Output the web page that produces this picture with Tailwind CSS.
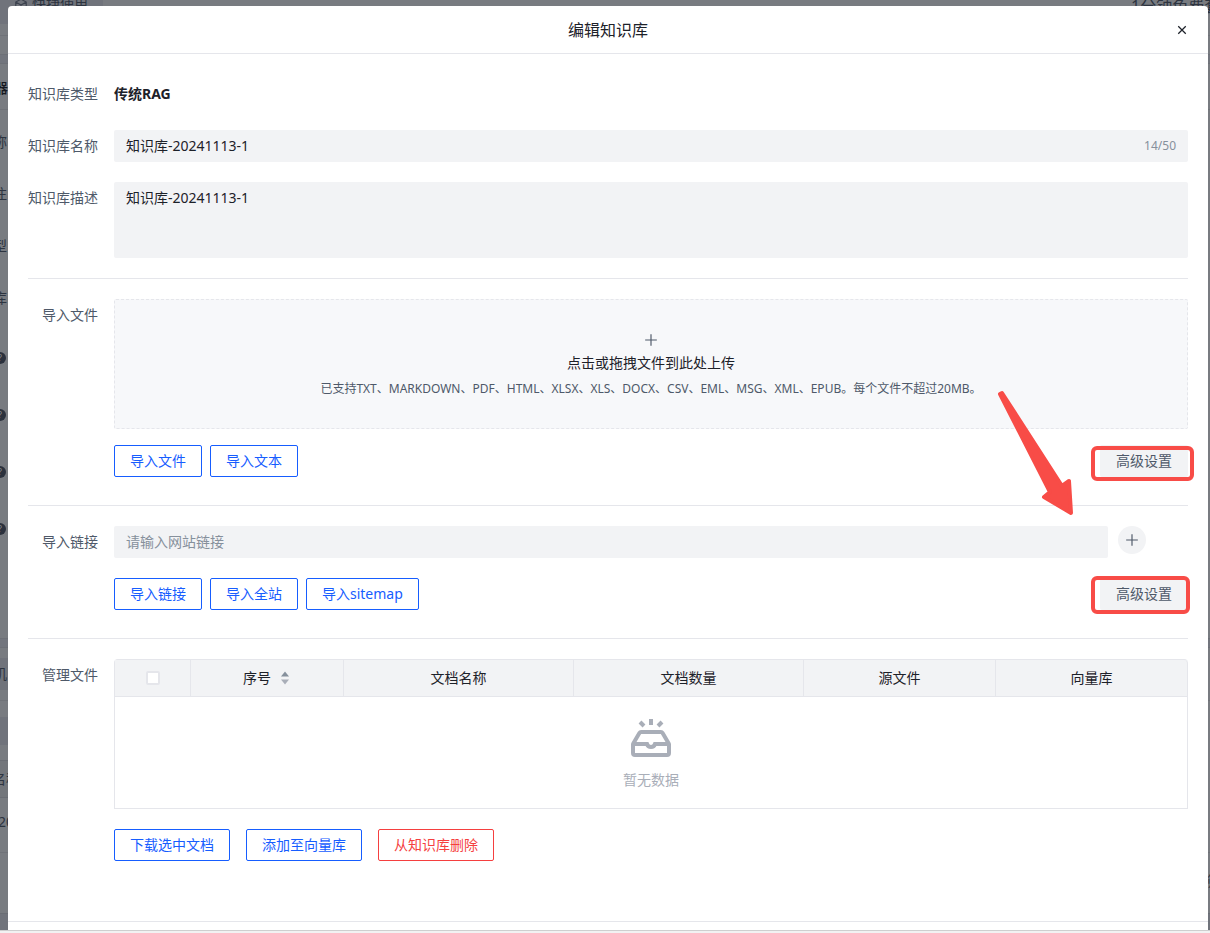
<!DOCTYPE html>
<html lang="zh-CN">
<head>
<meta charset="utf-8">
<meta name="viewport" content="width=device-width, initial-scale=1">
<title>编辑知识库</title>
<script src="https://cdn.jsdelivr.net/npm/@tailwindcss/browser@4"></script>
</head>
<body class="relative min-h-screen overflow-hidden bg-[#f2f2f2] font-['Noto_Sans','Noto_Sans_CJK_SC',sans-serif] text-sm text-[#1d2129]">

<!-- Dimmed page behind the dialog -->
<div class="absolute inset-x-0 top-0 bottom-[3px] overflow-hidden bg-[#787b80] text-[#2d3440]" aria-hidden="true">
  <div class="absolute top-0 left-0 h-6 w-[103px] bg-[#70737b]"></div>
  <svg class="absolute -top-0.5 left-3.5 size-3.5" viewBox="0 0 48 48" fill="none" stroke="#3c424e" stroke-width="4"><path d="M24 4 42 14v20L24 44 6 34V14Zm0 20v20M6 14l18 10 18-10"/></svg>
  <span class="absolute -top-1.5 left-8 leading-5">快捷使用</span>
  <span class="absolute -top-1.5 left-[1131px] text-base leading-6 whitespace-nowrap">1分钟免费套餐</span>
  <div class="absolute top-[35px] left-0 h-px w-full bg-[#6f7278]"></div>
  <div class="absolute top-[54px] left-0 h-2.5 w-full border-y border-[#6d7077] bg-[#72757d]"></div>
  <div class="absolute top-[109px] left-0 h-px w-full bg-[#6f7278]"></div>
  <span class="absolute top-[78px] -left-1.5 leading-5 font-medium text-[#15181f]">器</span>
  <span class="absolute top-[132px] -left-[7px] leading-5">称</span>
  <span class="absolute top-[184px] -left-[7px] leading-5">注</span>
  <span class="absolute top-[236px] -left-[7px] leading-5">型</span>
  <span class="absolute top-[288px] -left-[7px] leading-5">库</span>
  <span class="absolute top-[352px] -left-1.5 size-3 rounded-full bg-[#2b313d] text-center text-[9px] leading-3 text-[#85888d]">?</span>
  <span class="absolute top-[409px] -left-1.5 size-3 rounded-full bg-[#2b313d] text-center text-[9px] leading-3 text-[#85888d]">?</span>
  <span class="absolute top-[466px] -left-1.5 size-3 rounded-full bg-[#2b313d] text-center text-[9px] leading-3 text-[#85888d]">?</span>
  <span class="absolute top-[523px] -left-1.5 size-3 rounded-full bg-[#2b313d] text-center text-[9px] leading-3 text-[#85888d]">?</span>
  <div class="absolute top-[638px] left-0 h-2.5 w-full border-y border-[#6d7077] bg-[#72757d]"></div>
  <div class="absolute top-[658px] left-0 h-8 w-2 bg-[#70737b]"></div>
  <span class="absolute top-[664px] -left-[7px] leading-5">机</span>
  <div class="absolute top-[700px] left-0 h-px w-full bg-[#6f7278]"></div>
  <div class="absolute top-[717px] left-0 h-7 w-2 bg-[#70737b]"></div>
  <div class="absolute top-[760px] left-0 h-[38px] w-2 border-y border-[#6a6d74] bg-[#73767b]"></div>
  <span class="absolute top-[769px] -left-2 leading-5">名称</span>
  <span class="absolute top-[812px] -left-0.5 leading-5">20</span>
  <span class="absolute top-[871px] left-[1207px] leading-5">筛</span>
  <div class="absolute top-[852px] left-0 h-px w-full bg-[#6f7278]"></div>
  <div class="absolute top-[913px] left-0 h-5 w-full border-t border-[#6a6d74] bg-[#70737b]"></div>
</div>
<div class="absolute inset-x-0 bottom-0 h-[3px] border-t border-[#cfcfcf] bg-[#f2f2f2]"></div>

<div role="dialog" aria-labelledby="dialog-title" class="relative mt-1.5 mr-0.5 mb-[3px] ml-2 rounded-t bg-white">
  <header class="relative flex h-12 items-center justify-center border-b border-[#e5e6eb]">
    <h1 id="dialog-title" class="text-base leading-6">编辑知识库</h1>
    <button type="button" aria-label="关闭" class="absolute right-5 flex size-3 items-center justify-center">
      <svg class="size-3" viewBox="0 0 48 48" fill="none" stroke="currentColor" stroke-width="5"><path d="M9 9l30 30M39 9 9 39"/></svg>
    </button>
  </header>

  <form class="px-5 pt-6">
    <div class="flex gap-4">
      <span class="w-[70px] shrink-0 text-right leading-8 whitespace-nowrap text-[#4e5969]">知识库类型</span>
      <span class="leading-8 font-bold">传统RAG</span>
    </div>

    <div class="mt-5 flex gap-4">
      <label for="kb-name" class="w-[70px] shrink-0 text-right leading-8 whitespace-nowrap text-[#4e5969]">知识库名称</label>
      <div class="flex h-8 min-w-0 flex-1 items-center rounded-xs bg-[#f2f3f5] px-3">
        <input id="kb-name" type="text" maxlength="50" value="知识库-20241113-1" class="min-w-0 flex-1 bg-transparent leading-5 outline-none">
        <span class="text-xs text-[#86909c]">14/50</span>
      </div>
    </div>

    <div class="mt-5 flex gap-4">
      <label for="kb-desc" class="w-[70px] shrink-0 text-right leading-8 whitespace-nowrap text-[#4e5969]">知识库描述</label>
      <textarea id="kb-desc" class="block h-[76px] min-w-0 flex-1 resize-none rounded-xs bg-[#f2f3f5] px-3 py-1.5 leading-5 outline-none">知识库-20241113-1</textarea>
    </div>

    <hr class="mt-5 border-[#e5e6eb]">

    <section class="mt-5 flex gap-4">
      <span class="w-[70px] shrink-0 text-right leading-8 text-[#4e5969]">导入文件</span>
      <div class="min-w-0 flex-1">
        <button type="button" class="flex h-[130px] w-full flex-col items-center justify-center rounded-xs border border-dashed border-[#e5e6eb] bg-[#f7f8fa] pt-1">
          <svg class="size-3.5 text-[#4e5969]" viewBox="0 0 48 48" fill="none" stroke="currentColor" stroke-width="4"><path d="M4 24h40M24 4v40"/></svg>
          <span class="mt-1 leading-6">点击或拖拽文件到此处上传</span>
          <span class="mt-1 text-xs leading-5 text-[#4e5969]">已支持TXT、MARKDOWN、PDF、HTML、XLSX、XLS、DOCX、CSV、EML、MSG、XML、EPUB。每个文件不超过20MB。</span>
        </button>
        <div class="mt-4 flex gap-2">
          <button type="button" class="h-8 rounded-xs border border-[#165dff] px-[15px] text-[#165dff]">导入文件</button>
          <button type="button" class="h-8 rounded-xs border border-[#165dff] px-[15px] text-[#165dff]">导入文本</button>
          <button type="button" class="relative ml-auto h-8 rounded-xs bg-[#f2f3f5] px-4 text-[#4e5969]">高级设置<span class="absolute top-px -right-1.5 -bottom-1 -left-[9px] rounded-md border-4 border-[#f84c47]"></span></button>
        </div>
      </div>
    </section>

    <hr class="mt-7 border-[#e5e6eb]">

    <section class="mt-5 flex gap-4">
      <label for="kb-link" class="w-[70px] shrink-0 text-right leading-8 text-[#4e5969]">导入链接</label>
      <div class="min-w-0 flex-1">
        <div class="flex items-start gap-2.5 pr-[42px]">
          <input id="kb-link" type="url" placeholder="请输入网站链接" class="h-8 min-w-0 flex-1 rounded-xs bg-[#f2f3f5] px-3 pb-0.5 outline-none placeholder:text-[#86909c]">
          <button type="button" aria-label="添加链接" class="flex size-7 items-center justify-center rounded-full bg-[#f2f3f5] text-[#4e5969]">
            <svg class="size-3.5" viewBox="0 0 48 48" fill="none" stroke="currentColor" stroke-width="4"><path d="M4 24h40M24 4v40"/></svg>
          </button>
        </div>
        <div class="mt-5 flex gap-2">
          <button type="button" class="h-8 rounded-xs border border-[#165dff] px-[15px] text-[#165dff]">导入链接</button>
          <button type="button" class="h-8 rounded-xs border border-[#165dff] px-[15px] text-[#165dff]">导入全站</button>
          <button type="button" class="h-8 rounded-xs border border-[#165dff] px-[15px] text-[#165dff]">导入sitemap</button>
          <button type="button" class="relative ml-auto h-8 rounded-xs bg-[#f2f3f5] px-4 text-[#4e5969]">高级设置<span class="absolute -top-0.5 -right-0.5 -bottom-1 -left-[9px] rounded-md border-4 border-[#f84c47]"></span></button>
        </div>
      </div>
    </section>

    <hr class="mt-7 border-[#e5e6eb]">

    <section class="mt-5 flex gap-4">
      <span class="w-[70px] shrink-0 text-right leading-8 text-[#4e5969]">管理文件</span>
      <div class="min-w-0 flex-1">
        <table class="w-full table-fixed border-separate border-spacing-0 rounded-t border-t border-l border-[#e5e6eb]">
          <thead class="bg-[#f2f3f5]">
            <tr class="h-[37px]">
              <th class="w-[76px] border-r border-b border-[#e5e6eb]"><input type="checkbox" aria-label="全选" class="mx-auto block size-3.5 appearance-none rounded-xs border-2 border-[#e5e6eb] bg-white"></th>
              <th class="w-[153px] border-r border-b border-[#e5e6eb] font-normal">
                <button type="button" class="mx-auto flex items-center gap-2.5 pr-0.5 leading-5">序号
                  <svg class="h-3.5 w-2" viewBox="0 0 8 14"><path fill="#86909c" d="M4 0.5 8 5.5H0z"/><path fill="#a9aeb8" d="M4 13.5 8 8.5H0z"/></svg>
                </button>
              </th>
              <th class="w-[230px] border-r border-b border-[#e5e6eb] font-normal">文档名称</th>
              <th class="w-[230px] border-r border-b border-[#e5e6eb] font-normal">文档数量</th>
              <th class="w-[192px] border-r border-b border-[#e5e6eb] font-normal">源文件</th>
              <th class="w-[192px] rounded-tr border-r border-b border-[#e5e6eb] font-normal">向量库</th>
            </tr>
          </thead>
          <tbody>
            <tr>
              <td colspan="6" class="h-28 border-r border-b border-[#e5e6eb] pb-0.5 text-center text-[#a9aeb8]">
                <svg class="mx-auto size-12" viewBox="0 0 48 48" fill="none" stroke="currentColor" stroke-width="4"><path d="M24 5v6m7 1 4-4m-18 4-4-4m28.5 22H28s-1 3-4 3-4-3-4-3H6.5M40 41H8a2 2 0 0 1-2-2v-8.46a2 2 0 0 1 .272-1.007l6.15-10.54A2 2 0 0 1 14.148 18H33.85a2 2 0 0 1 1.728.992l6.149 10.541A2 2 0 0 1 42 30.541V39a2 2 0 0 1-2 2Z"/></svg>
                <p class="mt-2 leading-5">暂无数据</p>
              </td>
            </tr>
          </tbody>
        </table>
        <div class="mt-5 flex gap-4">
          <button type="button" class="h-8 rounded-xs border border-[#165dff] px-[15px] text-[#165dff]">下载选中文档</button>
          <button type="button" class="h-8 rounded-xs border border-[#165dff] px-[15px] text-[#165dff]">添加至向量库</button>
          <button type="button" class="h-8 rounded-xs border border-[#f53f3f] px-[15px] text-[#f53f3f]">从知识库删除</button>
        </div>
      </div>
    </section>
  </form>
  <footer class="mt-[60px] h-[9px] border-t border-[#e5e6eb]"></footer>

  <!-- Annotation arrow -->
  <svg class="pointer-events-none absolute top-[382px] right-[132px] h-[130px] w-20" viewBox="0 0 80 130" fill="#f84c47" stroke="#f84c47" stroke-width="4" stroke-linejoin="round" aria-hidden="true"><path d="M4 6 6 5 66 98 73 93 75 125 48 109 54 104z"/></svg>
</div>
</body>
</html>
